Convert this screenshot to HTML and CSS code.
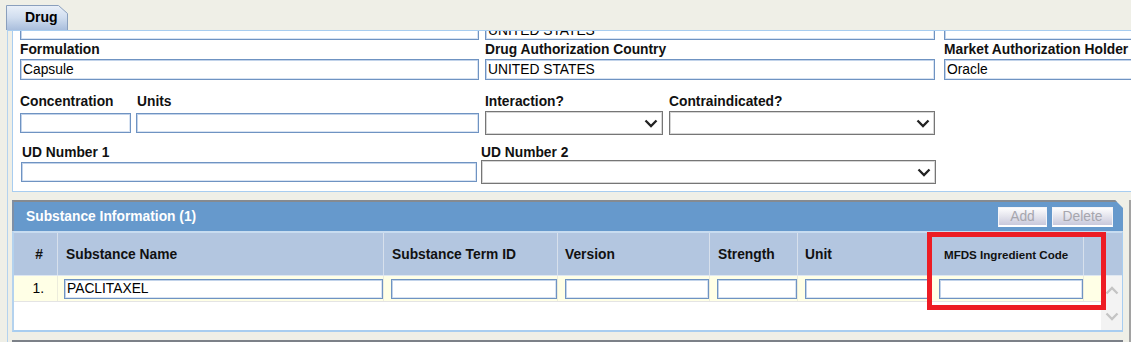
FILE: index.html
```html
<!DOCTYPE html>
<html>
<head>
<meta charset="utf-8">
<link rel="stylesheet" href="styles.css">
</head>
<body>
<div class="tabs">
  <div class="tab">
    <svg class="tab-bg" width="62" height="25" viewBox="0 0 62 25">
      <defs>
        <linearGradient id="tg" x1="0" y1="0" x2="0" y2="1">
          <stop offset="0" stop-color="#eaf0f9"/>
          <stop offset="0.5" stop-color="#d0ddef"/>
          <stop offset="1" stop-color="#a9bedc"/>
        </linearGradient>
      </defs>
      <path d="M0.5 25 V0.5 H52.5 L61.5 8.5 V25" fill="url(#tg)" stroke="#8a9fbd"/>
    </svg>
    <span class="tab-label">Drug</span>
  </div>
</div>
<div class="frame">
  <div class="panel">
    <div class="row row0">
      <input class="inp c1" value="">
      <input class="inp c2" value="UNITED STATES">
      <input class="inp c3" value="">
    </div>
    <div class="row row1">
      <div class="field c1"><span class="lbl">Formulation</span><input class="inp tall" value="Capsule"></div>
      <div class="field c2"><span class="lbl">Drug Authorization Country</span><input class="inp tall" value="UNITED STATES"></div>
      <div class="field c3"><span class="lbl">Market Authorization Holder</span><input class="inp tall" value="Oracle"></div>
    </div>
    <div class="row row2">
      <div class="field conc"><span class="lbl">Concentration</span><div class="slot"><input class="inp" value=""></div></div>
      <div class="field units"><span class="lbl">Units</span><div class="slot"><input class="inp" value=""></div></div>
      <div class="field inter"><span class="lbl">Interaction?</span><div class="slot"><div class="sel"><svg width="14" height="9" viewBox="0 0 14 9"><path d="M1.5 1.5 L7 7 L12.5 1.5" fill="none" stroke="#222" stroke-width="2.3"/></svg></div></div></div>
      <div class="field contra"><span class="lbl">Contraindicated?</span><div class="slot"><div class="sel"><svg width="14" height="9" viewBox="0 0 14 9"><path d="M1.5 1.5 L7 7 L12.5 1.5" fill="none" stroke="#222" stroke-width="2.3"/></svg></div></div></div>
    </div>
    <div class="row row3">
      <div class="field ud1"><span class="lbl">UD Number 1</span><div class="slot"><input class="inp" value=""></div></div>
      <div class="field ud2"><span class="lbl">UD Number 2</span><div class="slot"><div class="sel"><svg width="14" height="9" viewBox="0 0 14 9"><path d="M1.5 1.5 L7 7 L12.5 1.5" fill="none" stroke="#222" stroke-width="2.3"/></svg></div></div></div>
    </div>
  </div>

  <div class="subst-wrap">
    <div class="subst-col">
      <div class="subst">
        <div class="shead">
          <span class="stitle">Substance Information (1)</span>
          <div class="btns">
            <span class="btn add">Add</span>
            <span class="btn del">Delete</span>
          </div>
        </div>
        <div class="tbl">
          <div class="thead">
            <div class="th num">#</div>
            <div class="th">Substance Name</div>
            <div class="th">Substance Term ID</div>
            <div class="th ver">Version</div>
            <div class="th">Strength</div>
            <div class="th unit">Unit</div>
            <div class="th mfds">MFDS Ingredient Code</div>
            <div class="th last"></div>
          </div>
          <div class="tbody">
            <div class="rows">
              <div class="trow">
                <div class="td num">1.</div>
                <div class="td name"><input class="inp" value="PACLITAXEL"></div>
                <div class="td"><input class="inp" value=""></div>
                <div class="td"><input class="inp" value=""></div>
                <div class="td"><input class="inp" value=""></div>
                <div class="td"><input class="inp" value=""></div>
                <div class="td"><input class="inp" value=""></div>
                <div class="td last"></div>
              </div>
            </div>
            <div class="vscroll">
              <svg width="14" height="9" viewBox="0 0 14 9"><path d="M1.5 7.5 L7 2 L12.5 7.5" fill="none" stroke="#c4c4c4" stroke-width="2.3"/></svg>
              <svg width="14" height="9" viewBox="0 0 14 9"><path d="M1.5 1.5 L7 7 L12.5 1.5" fill="none" stroke="#c4c4c4" stroke-width="2.3"/></svg>
            </div>
          </div>
        </div>
        <div class="highlight"></div>
      </div>
      <div class="next"></div>
    </div>
    <div class="rgutter"></div>
  </div>
</div>
</body>
</html>
```

FILE: styles.css
```css
html, body {
  margin: 0;
  padding: 0;
}
body {
  background: #efefe7;
  font-family: "Liberation Sans", Arial, sans-serif;
  width: 1131px;
  height: 342px;
  overflow: hidden;
  color: #000;
}

/* Tab */
.tabs {
  height: 30px;
  box-sizing: border-box;
  padding: 5px 0 0 6px;
}
.tab {
  position: relative;
  width: 62px;
  height: 25px;
}
.tab-bg {
  position: absolute;
  left: 0;
  top: 0;
}
.tab-label {
  position: relative;
  display: block;
  padding-left: 19px;
  line-height: 24px;
  font-size: 14px;
  font-weight: bold;
}

/* Frame and form panel */
.frame {
  margin-left: 7px;
  border-left: 1px solid #b4d2ee;
  border-top: 1px solid #a8cdf0;
  padding-left: 4px;
}
.panel {
  background: #fff;
  border-left: 1px solid #a8cdf0;
  border-bottom: 1px solid #a8cdf0;
  width: 1111px;
  height: 160px;
  overflow: hidden;
  padding-left: 7px;
}
.row {
  display: flex;
  align-items: flex-start;
}
.inp {
  box-sizing: border-box;
  display: block;
  flex-shrink: 0;
  height: 20px;
  margin: 0;
  padding: 0 2px;
  border: 1px solid #6f93c2;
  box-shadow: inset 1px 1px 0 #c2d3ea, inset -1px -1px 0 #d8e3f2;
  background: #fff;
  font-family: "Liberation Sans", Arial, sans-serif;
  font-size: 13.8px;
  color: #000;
  outline: none;
  border-radius: 0;
}
.inp.tall {
  height: 21px;
}
.c1 { width: 459px; flex-shrink: 0; }
.c2 { width: 450px; margin-left: 6px; flex-shrink: 0; }
.c3 { width: 200px; margin-left: 9px; flex-shrink: 0; }

.row0 {
  margin-top: -11px;
}
.field {
  display: flex;
  flex-direction: column;
  flex-shrink: 0;
}
.lbl {
  font-size: 13.8px;
  font-weight: bold;
  line-height: 17px;
  padding-top: 1px;
  margin-bottom: 1px;
  white-space: nowrap;
  color: #111;
}
.slot {
  height: 24px;
  display: flex;
  align-items: center;
}
.slot .inp {
  width: 100%;
}
.row2 {
  margin-top: 12px;
}
.conc { width: 111px; }
.units { width: 343px; margin-left: 5px; }
.units .lbl { padding-left: 1px; }
.inter { width: 178px; margin-left: 6px; }
.contra { width: 266px; margin-left: 6px; }

.row3 {
  margin-top: 9px;
}
.row3 .lbl {
  line-height: 15px;
  margin-bottom: 0;
}
.ud1 { width: 456px; margin-left: 1px; }
.ud1 .lbl { padding-left: 1px; }
.ud2 { width: 455px; margin-left: 4px; }

.sel {
  box-sizing: border-box;
  width: 100%;
  height: 24px;
  border: 1px solid #767676;
  box-shadow: inset 0 0 0 1px #d6d6d6;
  background: #fff;
  display: flex;
  align-items: center;
  justify-content: flex-end;
  padding-right: 4px;
}

/* Substance section */
.subst-wrap {
  display: flex;
  margin-top: 8px;
}
.subst-col {
  width: 1111px;
}
.subst {
  position: relative;
}
.shead {
  box-sizing: border-box;
  height: 31px;
  border-top: 2px solid #858a90;
  border-left: 2px solid #7d8fa6;
  background: #6699cc;
  display: flex;
  align-items: center;
  justify-content: space-between;
  padding: 0 10px 0 12px;
  clip-path: polygon(0 0, calc(100% - 8px) 0, 100% 8px, 100% 100%, 0 100%);
}
.stitle {
  color: #fff;
  font-size: 13.8px;
  font-weight: bold;
}
.btns {
  display: flex;
  gap: 5px;
  padding-top: 1px;
}
.btn {
  box-sizing: border-box;
  height: 20px;
  line-height: 17px;
  text-align: center;
  font-size: 13.8px;
  color: #a6a6ae;
  background: linear-gradient(#fdfdfe, #e6e6ee 45%, #c9c9dc);
  border: 1px solid #f4f4f8;
  border-bottom: 2px solid #fff;
}
.btn.add { width: 49px; }
.btn.del { width: 61px; }

.tbl {
  border-top: 2px solid #c8dcf0;
  border-left: 2px solid #b4d2ee;
  border-right: 1px solid #a8cdf0;
  border-bottom: 2px solid #a8cdf0;
  background: #fff;
}
.thead {
  display: grid;
  grid-template-columns: 44px 326px 174px 152px 88px 134px 152px 38px;
  height: 43px;
  box-sizing: border-box;
  border-bottom: 1px solid #dfe7f1;
  background: #b3c6e0;
}
.th {
  box-sizing: border-box;
  border-right: 1px solid #d7e0ec;
  display: flex;
  align-items: center;
  padding-left: 8px;
  font-size: 13.8px;
  font-weight: bold;
  color: #111;
  white-space: nowrap;
}
.th.num {
  justify-content: flex-end;
  padding-left: 0;
  padding-right: 14px;
}
.th.ver { padding-left: 7px; }
.th.unit { padding-left: 7px; }
.th.mfds {
  padding-left: 12px;
  font-size: 11.6px;
}
.th.last { border-right: none; }

.tbody {
  display: flex;
  height: 54px;
}
.rows {
  width: 1087px;
}
.trow {
  display: grid;
  grid-template-columns: 44px 326px 174px 152px 88px 134px 152px 17px;
  height: 26px;
  box-sizing: border-box;
  border-bottom: 1px solid #e4e4e4;
}
.td {
  box-sizing: border-box;
  background: #ffffe6;
  border-right: 1px solid #ececdc;
  display: flex;
  align-items: center;
  padding-left: 7px;
  font-size: 13.8px;
}
.td .inp {
  flex: 1;
  min-width: 0;
}
.td.name { padding-left: 6px; }
.td.num {
  justify-content: flex-end;
  padding-left: 0;
  padding-right: 13px;
}
.td.last { border-right: none; }
.vscroll {
  width: 21px;
  background: #f3f3f3;
  display: flex;
  flex-direction: column;
  align-items: center;
  padding-top: 10px;
  gap: 17px;
  box-sizing: border-box;
}
.highlight {
  position: absolute;
  left: 915px;
  top: 32px;
  width: 179px;
  height: 78px;
  box-sizing: border-box;
  border: 5px solid #ed1c24;
}
.next {
  margin-top: 8px;
  height: 10px;
  border-top: 2px solid #7c8188;
  background: #6699cc;
}
.rgutter {
  margin-left: 6px;
  width: 2px;
  border-left: 2px solid #a2a2a2;
  background: #f4f4f0;
}
```
